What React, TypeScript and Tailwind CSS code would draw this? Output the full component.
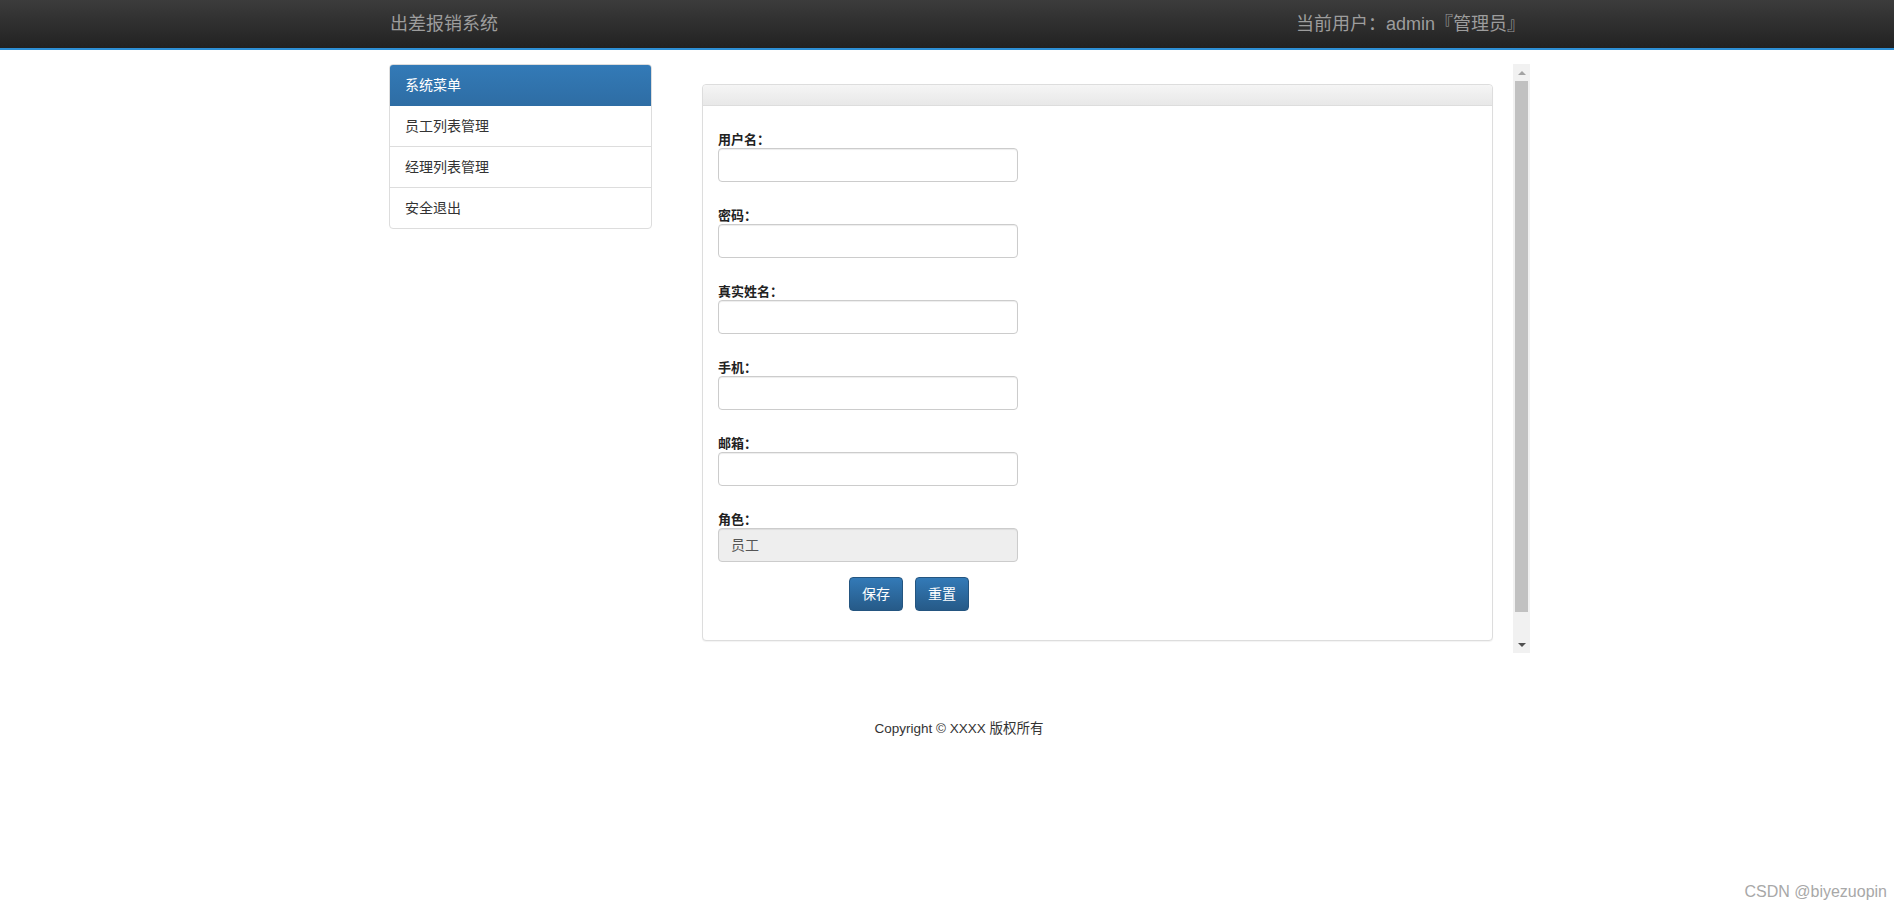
import React from "react";

const cjk = { fontFamily: '"Liberation Sans", "Noto Sans CJK SC", sans-serif' };

function Field({ label, value, disabled, last }: { label: string; value?: string; disabled?: boolean; last?: boolean }) {
  return (
    <div className={last ? "mb-[15px]" : "mb-[25px]"}>
      <div className="h-[17px] text-[13px] leading-[17px] font-bold text-[#222]">{label}</div>
      <div
        className={
          "w-[300px] h-[34px] rounded-[4px] border border-[#ccc] shadow-[inset_0_1px_1px_rgba(0,0,0,0.075)] flex items-center px-[12px] text-[14px] text-[#555] " +
          (disabled ? "bg-[#eee]" : "bg-white")
        }
      >
        {value}
      </div>
    </div>
  );
}

export default function App() {
  return (
    <div className="relative min-h-[910px] bg-white text-[#333]" style={cjk}>
      <div className="h-[50px] bg-gradient-to-b from-[#3c3c3c] to-[#222] border-b-2 border-[#2d8fd5]">
        <div className="ml-[374px] w-[1170px] h-[48px] flex items-center justify-between pl-[16px] pr-[19px] text-[18px] text-[#9d9d9d]">
          <span>出差报销系统</span>
          <span>当前用户：admin『管理员』</span>
        </div>
      </div>

      <div className="ml-[389px] mt-[14px] flex">
        <div className="w-[263px] self-start border border-[#ddd] rounded-[4px] overflow-hidden text-[14px]">
          <div className="h-[41px] bg-gradient-to-b from-[#337ab7] to-[#2e6da4] text-white flex items-center px-[15px]">系统菜单</div>
          <div className="h-[40px] flex items-center px-[15px] text-[#333]">员工列表管理</div>
          <div className="h-[41px] border-t border-[#ddd] flex items-center px-[15px] text-[#333]">经理列表管理</div>
          <div className="h-[41px] border-t border-[#ddd] flex items-center px-[15px] text-[#333]">安全退出</div>
        </div>

        <div className="ml-[30px] flex h-[589px]">
          <div className="w-[831px] h-[589px] overflow-hidden p-[20px]">
            <div className="w-[791px] border border-[#ddd] rounded-[4px] bg-white shadow-[0_1px_1px_rgba(0,0,0,0.05)]">
              <div className="h-[21px] border-b border-[#ddd] bg-gradient-to-b from-[#f5f5f5] to-[#e8e8e8] rounded-t-[4px]" />
              <div className="pt-[25px] pb-[29px] px-[15px]">
                <Field label="用户名：" />
                <Field label="密码：" />
                <Field label="真实姓名：" />
                <Field label="手机：" />
                <Field label="邮箱：" />
                <Field label="角色：" value="员工" disabled last />
                <div className="flex gap-[12px] ml-[131px]">
                  <button className="h-[34px] px-[12px] rounded-[4px] border border-[#245580] bg-gradient-to-b from-[#337ab7] to-[#265a88] text-white text-[14px]">保存</button>
                  <button className="h-[34px] px-[12px] rounded-[4px] border border-[#245580] bg-gradient-to-b from-[#337ab7] to-[#265a88] text-white text-[14px]">重置</button>
                </div>
              </div>
            </div>
          </div>
          <div className="w-[17px] h-[589px] bg-[#f1f1f1] flex flex-col">
            <div className="h-[17px] flex items-center justify-center">
              <div className="w-0 h-0 border-l-[4px] border-r-[4px] border-b-[4px] border-l-transparent border-r-transparent border-b-[#a3a3a3]" />
            </div>
            <div className="px-[2px]">
              <div className="h-[531px] bg-[#c1c1c1]" />
            </div>
            <div className="flex-1" />
            <div className="h-[17px] flex items-center justify-center">
              <div className="w-0 h-0 border-l-[4px] border-r-[4px] border-t-[4px] border-l-transparent border-r-transparent border-t-[#505050]" />
            </div>
          </div>
        </div>
      </div>

      <div className="ml-[374px] w-[1170px] mt-[67px] text-center text-[13.5px] leading-[18px] text-[#333]">Copyright © XXXX 版权所有</div>

      <div className="absolute right-[7px] bottom-[9px] text-[16px] leading-[18px] text-[#a8a8a8]" style={{ fontFamily: '"Liberation Sans", Arial, sans-serif' }}>
        CSDN @biyezuopin
      </div>
    </div>
  );
}
